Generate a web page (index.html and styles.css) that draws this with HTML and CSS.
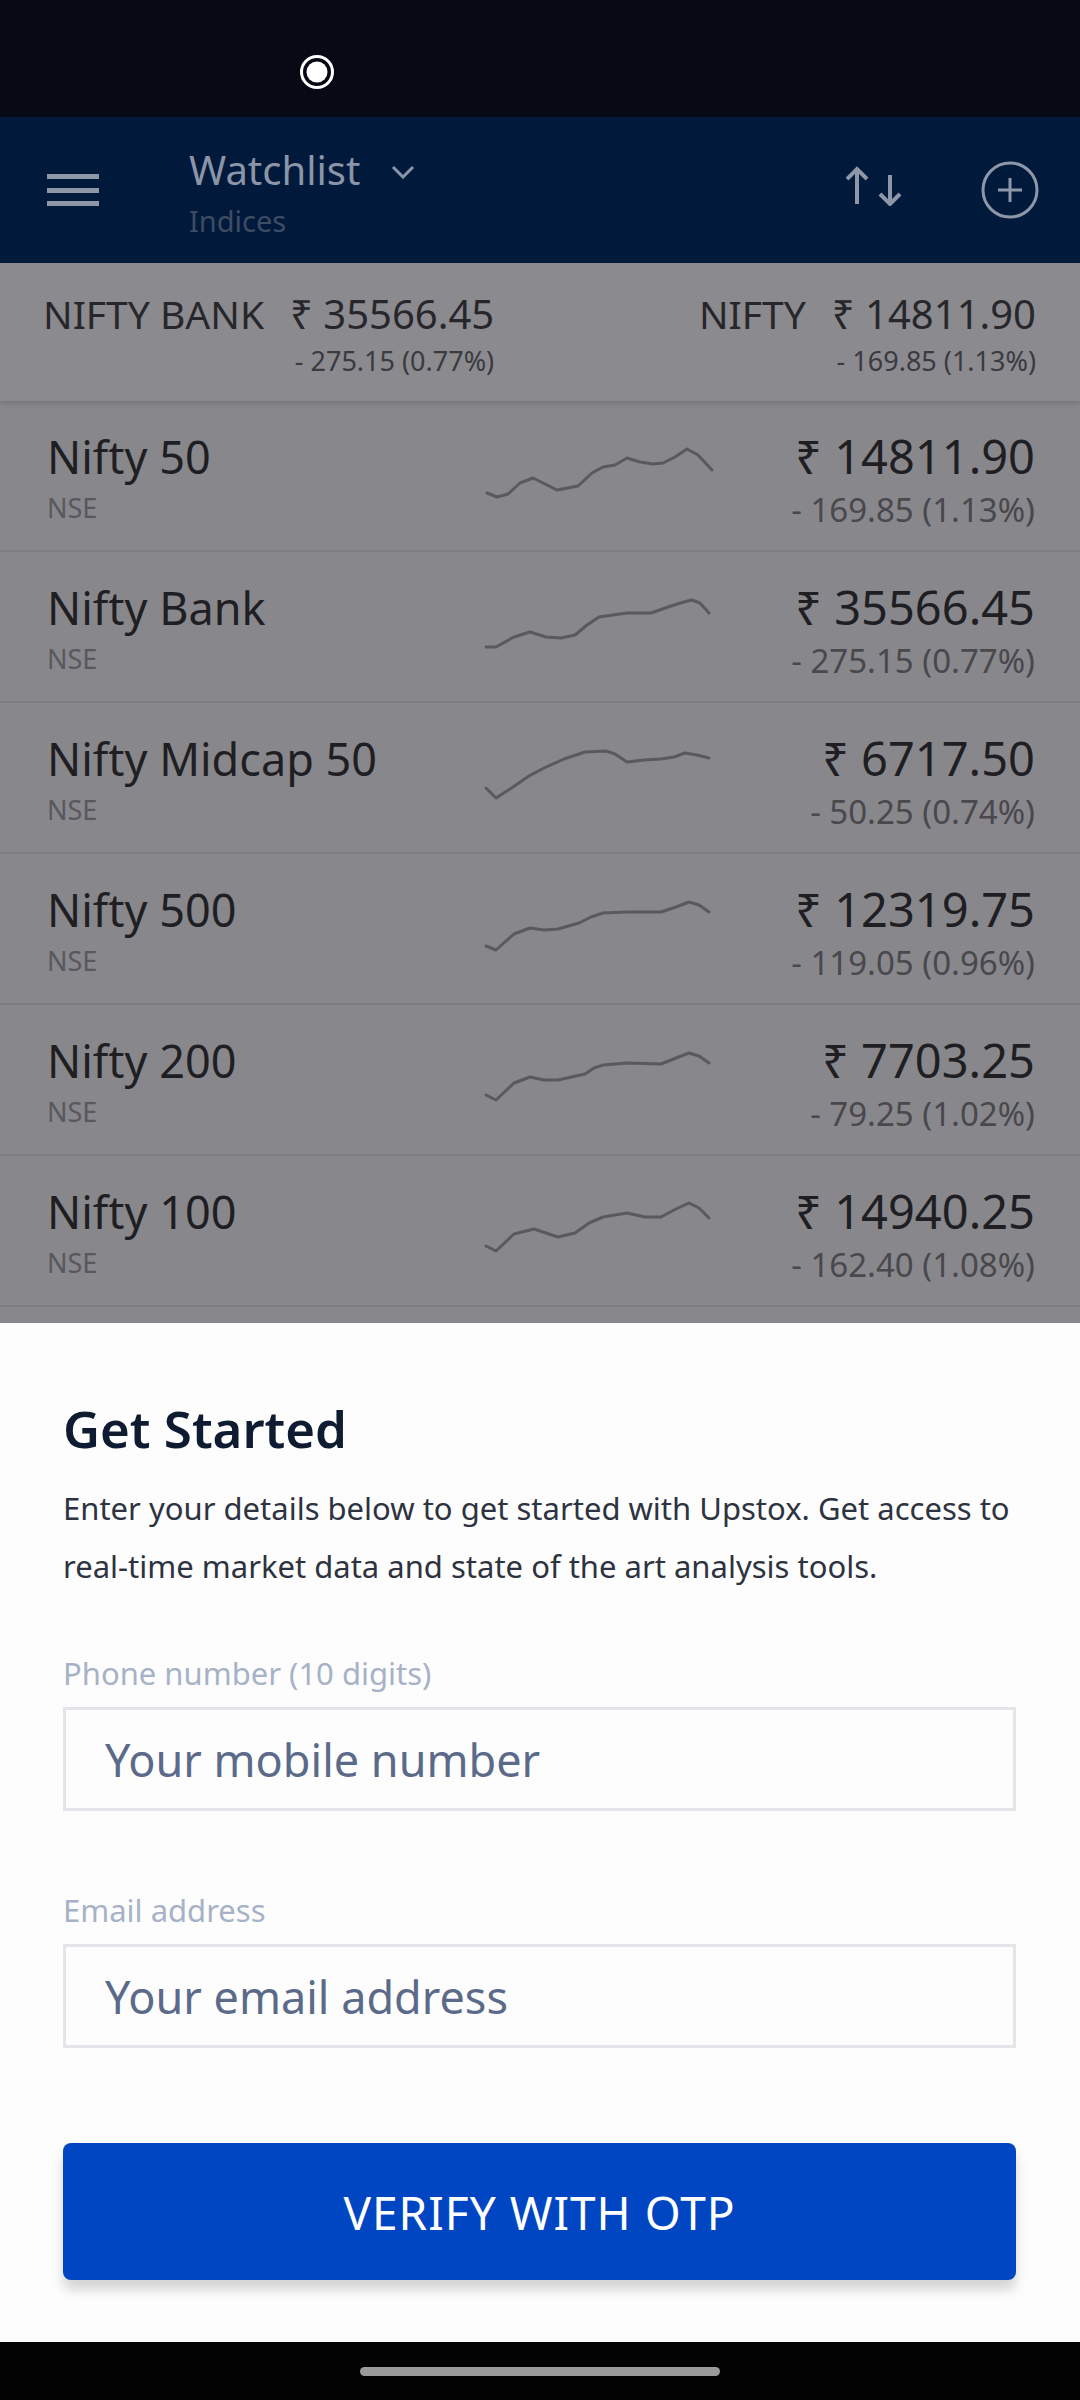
FILE: index.html
```html
<!DOCTYPE html>
<html lang="en">
<head>
  <meta charset="UTF-8" />
  <meta name="viewport" content="width=device-width, initial-scale=1.0"/>
  <title>Upstox - Get Started</title>
  <link rel="stylesheet" href="styles.css">
</head>
<body>

  <!-- Status bar -->
  <div class="status-bar">
    <svg class="rec-dot" width="36" height="36" viewBox="0 0 36 36">
      <circle cx="18" cy="18" r="15.5" fill="none" stroke="#ffffff" stroke-width="3"/>
      <circle cx="18" cy="18" r="10.5" fill="#ffffff"/>
    </svg>
  </div>

  <div class="screen">

    <!-- App bar -->
    <div class="app-bar">
      <svg class="menu-icon" width="52" height="34" viewBox="0 0 52 34">
        <rect x="0" y="1" width="52" height="5" fill="#8e97a8"/>
        <rect x="0" y="15" width="52" height="5" fill="#8e97a8"/>
        <rect x="0" y="28" width="52" height="5" fill="#8e97a8"/>
      </svg>

      <div class="title-block">
        <div class="title">Watchlist
          <svg class="chevron" width="24" height="14" viewBox="0 0 24 14">
            <polyline points="2,2 12,12 22,2" fill="none" stroke="#8b95a7" stroke-width="3"/>
          </svg>
        </div>
        <div class="subtitle">Indices</div>
      </div>

      <svg class="sort-icon" width="58" height="40" viewBox="0 0 58 40">
        <g fill="none" stroke="#8e97a8" stroke-width="4">
          <line x1="11" y1="3" x2="11" y2="38"/>
          <polyline points="1,13 11,3 21,13"/>
          <line x1="44" y1="9" x2="44" y2="38"/>
          <polyline points="34,28 44,38 54,28"/>
        </g>
      </svg>

      <svg class="add-icon" width="60" height="60" viewBox="0 0 60 60">
        <g fill="none" stroke="#8e97a8" stroke-width="3">
          <circle cx="30" cy="30" r="27"/>
          <line x1="18" y1="30" x2="42" y2="30"/>
          <line x1="30" y1="18" x2="30" y2="42"/>
        </g>
      </svg>
    </div>

    <!-- Ticker strip -->
    <div class="ticker">
      <div class="tick">
        <span class="tick-name">NIFTY BANK</span>
        <span class="tick-price">₹ 35566.45</span>
        <span class="tick-change">- 275.15 (0.77%)</span>
      </div>
      <div class="tick">
        <span class="tick-name">NIFTY</span>
        <span class="tick-price">₹ 14811.90</span>
        <span class="tick-change">- 169.85 (1.13%)</span>
      </div>
    </div>

    <!-- Index list -->
    <div class="list">
      <div class="row">
        <div class="idx-left">
          <div class="idx-name">Nifty 50</div>
          <div class="idx-exch">NSE</div>
        </div>
        <svg class="spark" width="230" height="64" viewBox="0 0 230 64">
          <polyline points="3,52 13,56 24,53 36,42 49,37 73,49 94,45 108,32 119,26 131,24 143,17 156,21 169,23 179,22 191,16 203,8 214,14 228,29"/>
        </svg>
        <div class="idx-right">
          <div class="idx-price">₹ 14811.90</div>
          <div class="idx-change">- 169.85 (1.13%)</div>
        </div>
      </div>

      <div class="row">
        <div class="idx-left">
          <div class="idx-name">Nifty Bank</div>
          <div class="idx-exch">NSE</div>
        </div>
        <svg class="spark" width="230" height="64" viewBox="0 0 230 64">
          <polyline points="2,55 12,55 30,45 46,40 62,45 77,46 91,43 103,33 115,25 143,21 167,21 187,14 200,10 208,8 216,11 225,21"/>
        </svg>
        <div class="idx-right">
          <div class="idx-price">₹ 35566.45</div>
          <div class="idx-change">- 275.15 (0.77%)</div>
        </div>
      </div>

      <div class="row">
        <div class="idx-left">
          <div class="idx-name">Nifty Midcap 50</div>
          <div class="idx-exch">NSE</div>
        </div>
        <svg class="spark" width="230" height="64" viewBox="0 0 230 64">
          <polyline points="2,45 12,55 29,44 45,33 60,25 80,16 101,9 122,8 131,11 143,19 160,17 177,16 190,14 201,10 213,12 225,15"/>
        </svg>
        <div class="idx-right">
          <div class="idx-price">₹ 6717.50</div>
          <div class="idx-change">- 50.25 (0.74%)</div>
        </div>
      </div>

      <div class="row">
        <div class="idx-left">
          <div class="idx-name">Nifty 500</div>
          <div class="idx-exch">NSE</div>
        </div>
        <svg class="spark" width="230" height="64" viewBox="0 0 230 64">
          <polyline points="2,52 12,56 30,40 46,34 60,36 74,35 95,29 107,23 119,19 143,18 177,18 192,13 205,8 215,11 225,18"/>
        </svg>
        <div class="idx-right">
          <div class="idx-price">₹ 12319.75</div>
          <div class="idx-change">- 119.05 (0.96%)</div>
        </div>
      </div>

      <div class="row">
        <div class="idx-left">
          <div class="idx-name">Nifty 200</div>
          <div class="idx-exch">NSE</div>
        </div>
        <svg class="spark" width="230" height="64" viewBox="0 0 230 64">
          <polyline points="2,50 12,55 30,38 46,32 60,35 74,35 101,29 110,23 119,20 143,18 177,19 192,13 205,8 215,11 225,18"/>
        </svg>
        <div class="idx-right">
          <div class="idx-price">₹ 7703.25</div>
          <div class="idx-change">- 79.25 (1.02%)</div>
        </div>
      </div>

      <div class="row">
        <div class="idx-left">
          <div class="idx-name">Nifty 100</div>
          <div class="idx-exch">NSE</div>
        </div>
        <svg class="spark" width="230" height="64" viewBox="0 0 230 64">
          <polyline points="2,50 12,55 30,38 50,33 74,41 91,37 105,27 119,21 143,17 161,21 177,21 192,13 205,7 215,12 225,22"/>
        </svg>
        <div class="idx-right">
          <div class="idx-price">₹ 14940.25</div>
          <div class="idx-change">- 162.40 (1.08%)</div>
        </div>
      </div>
    </div>

    <!-- Bottom sheet -->
    <div class="sheet">
      <h1>Get Started</h1>
      <p class="intro">Enter your details below to get started with Upstox. Get access to real-time market data and state of the art analysis tools.</p>

      <label class="field-label" for="phone">Phone number (10 digits)</label>
      <input class="field" id="phone" type="tel" placeholder="Your mobile number" />

      <label class="field-label second" for="email">Email address</label>
      <input class="field" id="email" type="email" placeholder="Your email address" />

      <button class="otp-btn">VERIFY WITH OTP</button>
    </div>
  </div>

  <!-- Gesture nav -->
  <div class="nav-bar">
    <div class="home-pill"></div>
  </div>

</body>
</html>
```

FILE: styles.css
```css
* {
  box-sizing: border-box;
}

html, body {
  margin: 0;
  padding: 0;
}

body {
  width: 1080px;
  height: 2400px;
  overflow: hidden;
  display: flex;
  flex-direction: column;
  font-family: "Noto Sans", "Open Sans", sans-serif;
  background: #000;
}

/* Status bar */
.status-bar {
  height: 117px;
  flex-shrink: 0;
  background: #070a14;
  padding: 54px 0 0 299px;
}

.rec-dot {
  display: block;
}

/* Screen under the sheet */
.screen {
  flex: 1;
  position: relative;
  overflow: hidden;
  background: #88878c;
}

/* App bar */
.app-bar {
  height: 146px;
  background: #011a3c;
  display: flex;
  align-items: center;
  padding: 0 40px 0 47px;
}

.menu-icon {
  display: block;
  flex-shrink: 0;
}

.title-block {
  align-self: flex-start;
  padding-top: 30px;
  margin-left: 90px;
}

.title {
  font-size: 40px;
  line-height: 46px;
  color: #8b95a7;
  white-space: nowrap;
}

.chevron {
  margin-left: 20px;
  vertical-align: 6px;
}

.subtitle {
  font-size: 29px;
  line-height: 36px;
  margin-top: 10px;
  color: #3d4b63;
}

.sort-icon {
  display: block;
  margin-left: auto;
  margin-top: -8px;
}

.add-icon {
  display: block;
  margin-left: 76px;
}

/* Ticker strip */
.ticker {
  height: 138px;
  background: #8b8a8f;
  display: flex;
  justify-content: space-between;
  align-items: flex-start;
  padding: 27px 44px 0 43px;
  box-shadow: 0 3px 4px rgba(0,0,0,0.12);
  position: relative;
}

.tick {
  display: grid;
  grid-template-columns: auto auto;
  column-gap: 26px;
  color: #27272b;
}

.tick-name,
.tick-price {
  font-size: 39px;
  line-height: 48px;
}

.tick-price {
  justify-self: end;
  font-size: 40px;
}

.tick-change {
  grid-column: 2;
  justify-self: end;
  font-size: 27px;
  line-height: 40px;
  margin-top: 3px;
  color: #3a3a3f;
}

/* Index list */
.row {
  height: 151px;
  display: grid;
  grid-template-columns: 437px 230px 1fr;
  align-items: start;
  padding: 0 45px 0 47px;
  border-bottom: 2px solid #7e7d82;
}

.idx-left {
  padding-top: 30px;
}

.idx-name {
  font-size: 45px;
  line-height: 52px;
  color: #1f1f23;
  white-space: nowrap;
}

.idx-exch {
  font-size: 27px;
  line-height: 34px;
  margin-top: 8px;
  color: #58585d;
}

.spark {
  display: block;
  margin-top: 40px;
}

.spark polyline {
  fill: none;
  stroke: #5a595e;
  stroke-width: 3;
  stroke-linejoin: round;
  stroke-linecap: round;
}

.idx-right {
  padding-top: 28px;
  text-align: right;
  white-space: nowrap;
}

.idx-price {
  font-size: 47px;
  line-height: 54px;
  color: #1f1f23;
}

.idx-change {
  font-size: 33px;
  line-height: 40px;
  margin-top: 7px;
  color: #48484d;
}

/* Bottom sheet */
.sheet {
  position: absolute;
  left: 0;
  right: 0;
  bottom: 0;
  height: 1019px;
  background: #fdfdfe;
  padding: 75px 64px 0 63px;
  display: flex;
  flex-direction: column;
}

.sheet h1 {
  margin: 0;
  font-size: 51px;
  line-height: 60px;
  font-weight: 600;
  color: #0e1b30;
}

.intro {
  margin: 21px 0 0;
  font-size: 31px;
  line-height: 58px;
  color: #2d3340;
}

.field-label {
  display: block;
  margin-top: 58px;
  font-size: 31px;
  line-height: 40px;
  color: #a7b2c7;
}

.field-label.second {
  margin-top: 79px;
}

.field {
  display: block;
  width: 100%;
  height: 104px;
  margin-top: 14px;
  padding: 0 0 0 39px;
  border: 3px solid #e4e4e9;
  border-radius: 0;
  background: #fdfdfe;
  font-family: inherit;
  font-size: 45px;
  color: #2d3340;
  outline: none;
}

.field::placeholder {
  color: #5b6a89;
  opacity: 1;
}

.otp-btn {
  display: block;
  width: 100%;
  height: 137px;
  margin-top: 95px;
  border: none;
  border-radius: 8px;
  background: #0046c3;
  color: #ffffff;
  font-family: inherit;
  font-size: 46px;
  letter-spacing: 1px;
  box-shadow: 0 10px 12px rgba(0,0,0,0.16);
  cursor: pointer;
}

/* Gesture nav */
.nav-bar {
  height: 58px;
  flex-shrink: 0;
  background: #030303;
  display: flex;
  justify-content: center;
  padding-top: 25px;
}

.home-pill {
  width: 360px;
  height: 9px;
  border-radius: 5px;
  background: #9a9a9a;
}
```
